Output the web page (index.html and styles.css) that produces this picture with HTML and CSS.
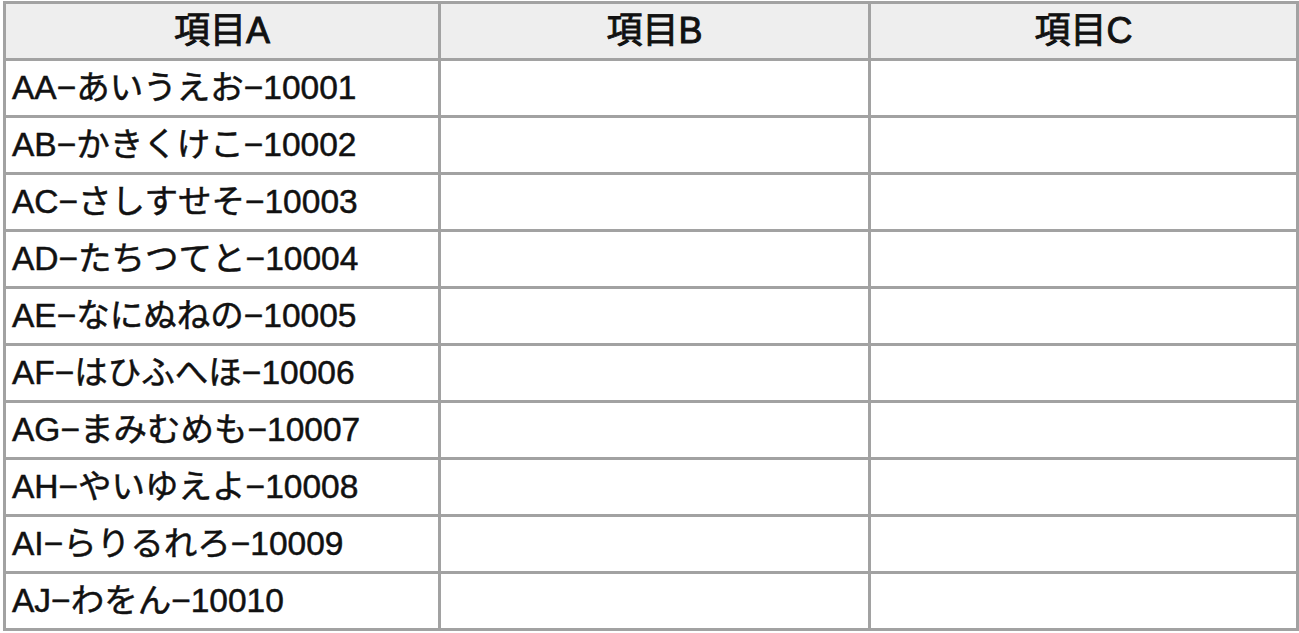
FILE: index.html
```html
<!DOCTYPE html>
<html lang="ja">
<head>
<meta charset="utf-8">
<title>表</title>
<link rel="stylesheet" href="styles.css">
</head>
<body>
<div class="sheet">
  <div class="cell head">項目A</div>
  <div class="cell head">項目B</div>
  <div class="cell head">項目C</div>
  <div class="cell">AA−あいうえお−10001</div><div class="cell"></div><div class="cell"></div>
  <div class="cell">AB−かきくけこ−10002</div><div class="cell"></div><div class="cell"></div>
  <div class="cell">AC−さしすせそ−10003</div><div class="cell"></div><div class="cell"></div>
  <div class="cell">AD−たちつてと−10004</div><div class="cell"></div><div class="cell"></div>
  <div class="cell">AE−なにぬねの−10005</div><div class="cell"></div><div class="cell"></div>
  <div class="cell">AF−はひふへほ−10006</div><div class="cell"></div><div class="cell"></div>
  <div class="cell">AG−まみむめも−10007</div><div class="cell"></div><div class="cell"></div>
  <div class="cell">AH−やいゆえよ−10008</div><div class="cell"></div><div class="cell"></div>
  <div class="cell">AI−らりるれろ−10009</div><div class="cell"></div><div class="cell"></div>
  <div class="cell">AJ−わをん−10010</div><div class="cell"></div><div class="cell"></div>
</div>
</body>
</html>
```
FILE: styles.css
```css
html, body {
  margin: 0;
  padding: 0;
  background: #ffffff;
  overflow: hidden;
}
.sheet {
  margin: 1px 0 0 3px;
  width: 1296px;
  box-sizing: border-box;
  display: grid;
  grid-template-columns: 432px 427px 1fr;
  grid-auto-rows: 54px;
  gap: 3px;
  padding: 3px;
  background: #a2a2a2;
  font-family: "Liberation Sans", "Noto Sans CJK JP", sans-serif;
  color: #111111;
}
.cell {
  background: #ffffff;
  display: flex;
  align-items: center;
  padding-left: 6px;
  font-size: 33.5px;
  line-height: 1;
  font-weight: 400;
  white-space: nowrap;
  -webkit-text-stroke: 0.5px #111;
}
.head {
  background: #eeeeee;
  justify-content: center;
  padding-left: 0;
  font-size: 36px;
  -webkit-text-stroke: 0.9px #111;
}
```
